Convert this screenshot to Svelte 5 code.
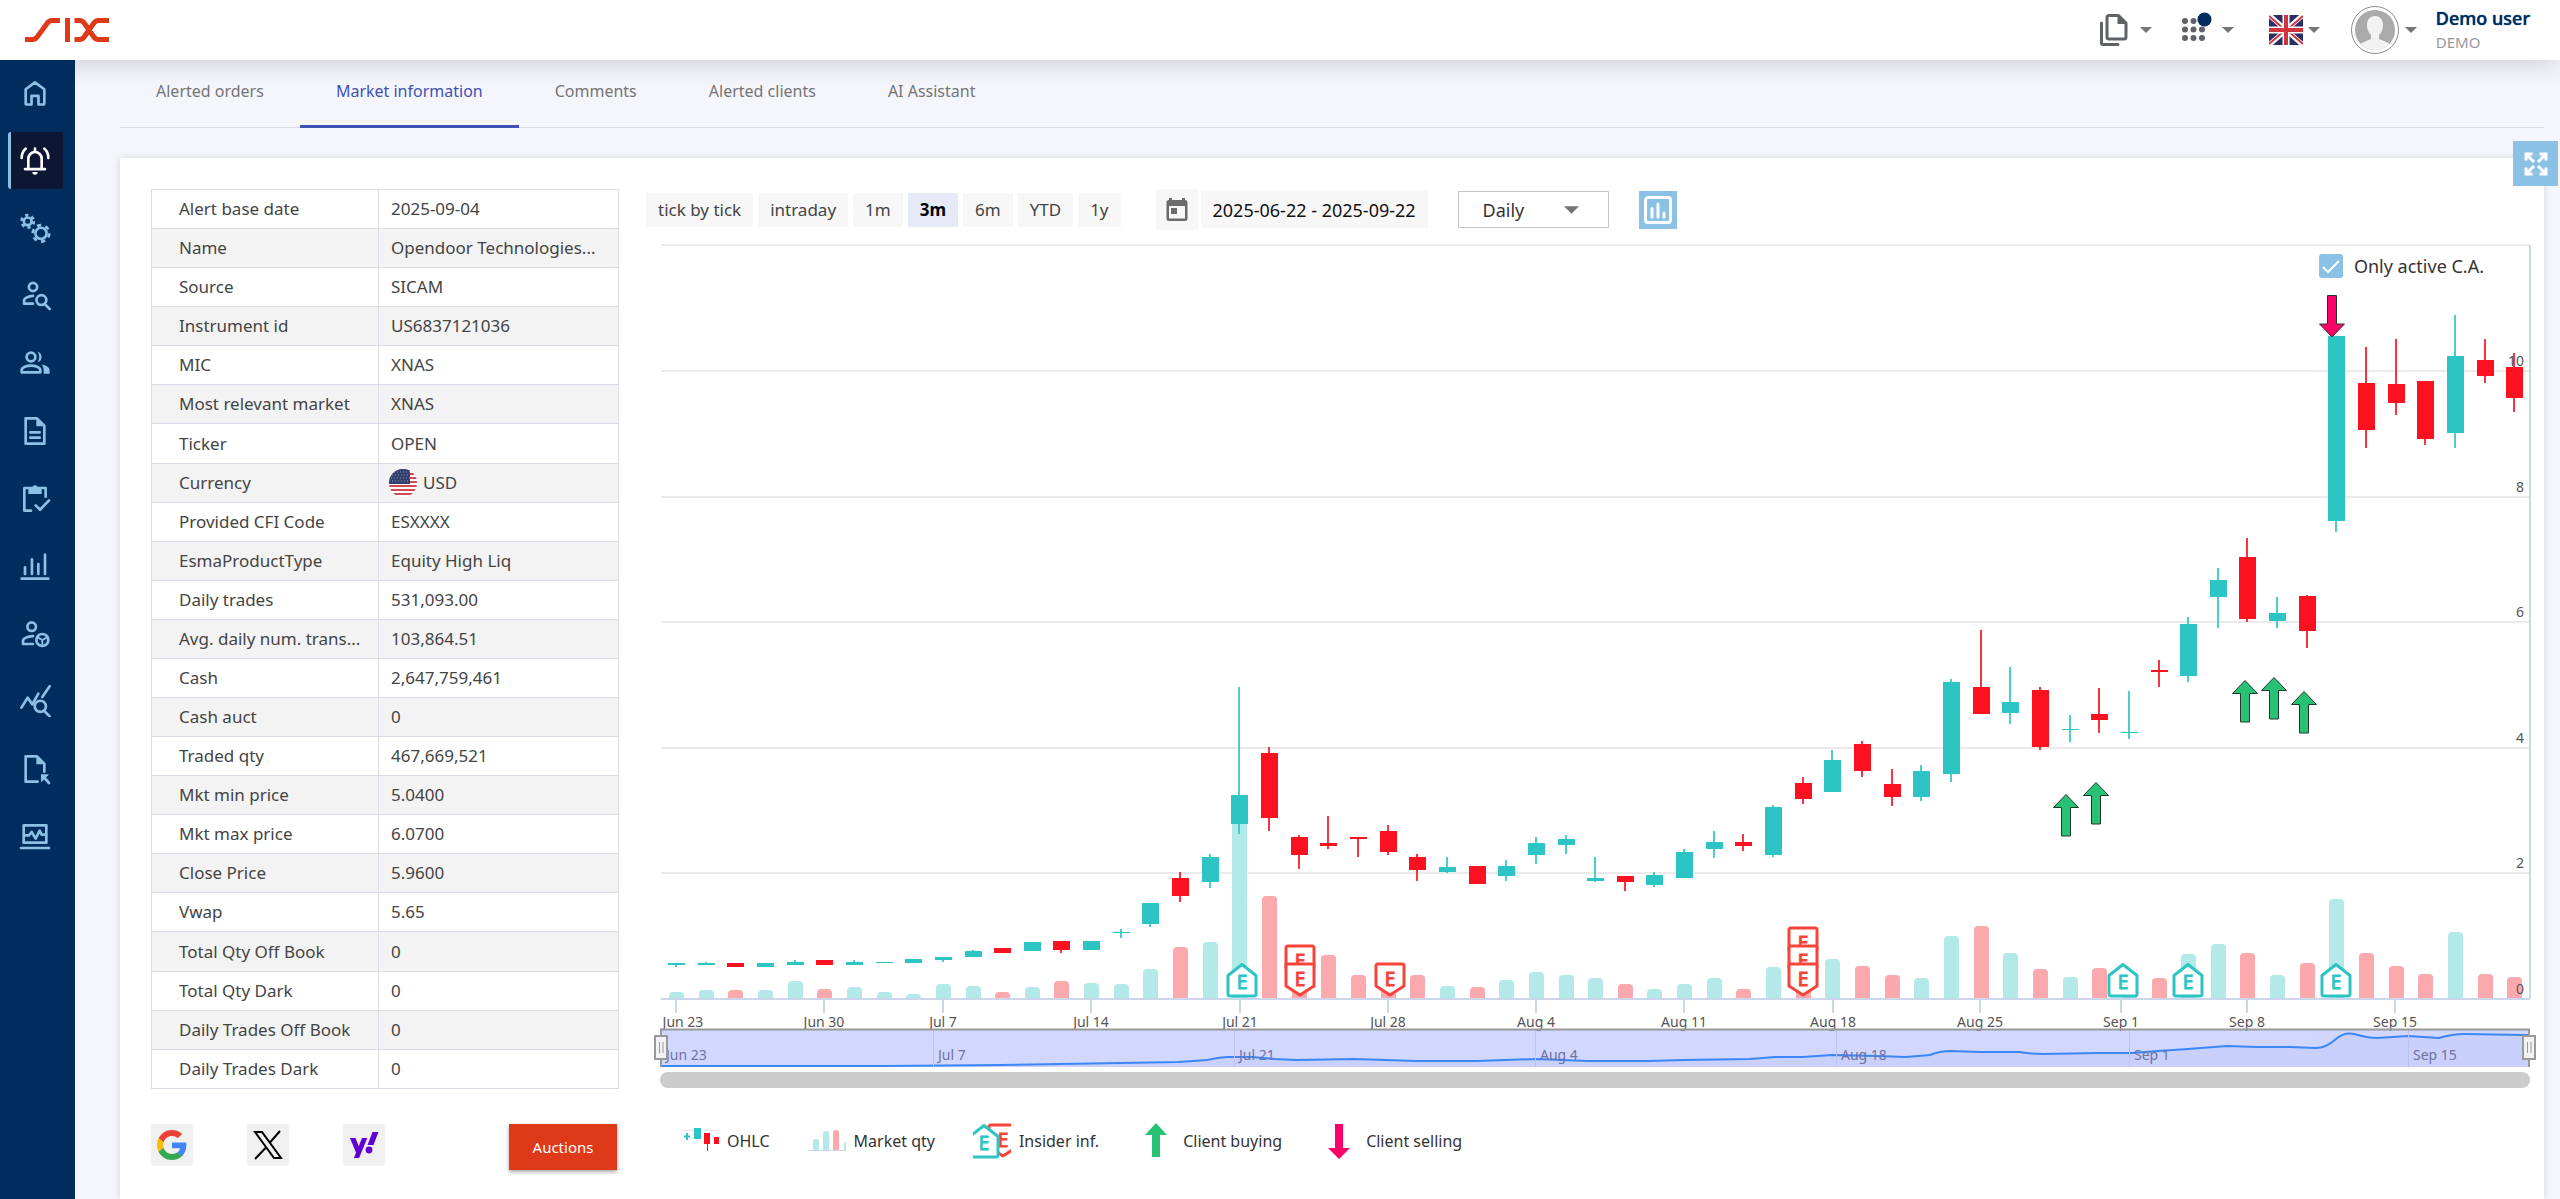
<script lang="ts">
  type Quote = { up: boolean; high: number; top: number; bottom: number; low: number; volume: number };

  const tabs = ['Alerted orders', 'Market information', 'Comments', 'Alerted clients', 'AI Assistant'];
  const ranges = ['tick by tick', 'intraday', '1m', '3m', '6m', 'YTD', '1y'];

  let activeTab = $state('Market information');
  let activeRange = $state('3m');
  let period = $state('2025-06-22 - 2025-09-22');
  let interval = $state('Daily');
  let onlyActive = $state(true);

  const details = [
    ['Alert base date', '2025-09-04'],
    ['Name', 'Opendoor Technologies...'],
    ['Source', 'SICAM'],
    ['Instrument id', 'US6837121036'],
    ['MIC', 'XNAS'],
    ['Most relevant market', 'XNAS'],
    ['Ticker', 'OPEN'],
    ['Currency', 'USD'],
    ['Provided CFI Code', 'ESXXXX'],
    ['EsmaProductType', 'Equity High Liq'],
    ['Daily trades', '531,093.00'],
    ['Avg. daily num. trans...', '103,864.51'],
    ['Cash', '2,647,759,461'],
    ['Cash auct', '0'],
    ['Traded qty', '467,669,521'],
    ['Mkt min price', '5.0400'],
    ['Mkt max price', '6.0700'],
    ['Close Price', '5.9600'],
    ['Vwap', '5.65'],
    ['Total Qty Off Book', '0'],
    ['Total Qty Dark', '0'],
    ['Daily Trades Off Book', '0'],
    ['Daily Trades Dark', '0'],
  ];

  const menu = ['home', 'alerts', 'settings', 'person-search', 'group', 'document', 'tasks', 'bars', 'person-globe', 'trend-search', 'import', 'monitor'];

  // direction, then high, body top, body bottom, low and volume as heights above the axis
  const raw: [string, number, number, number, number, number][] = [
    ['u', 36, 36, 34, 32, 7], ['u', 37, 36, 34, 34, 9], ['d', 36, 36, 32, 32, 9], ['u', 36, 36, 32, 32, 9], ['u', 39, 37, 34, 34, 18],
    ['d', 39, 39, 34, 34, 10], ['u', 39, 37, 34, 34, 12], ['u', 37, 37, 36, 36, 7], ['u', 40, 40, 36, 36, 5],
    ['u', 42, 42, 39, 37, 15], ['u', 49, 48, 42, 42, 13], ['d', 51, 51, 46, 46, 7], ['u', 57, 57, 48, 48, 12], ['d', 58, 58, 49, 46, 18],
    ['u', 58, 58, 49, 49, 16], ['u', 70, 67, 66, 61, 15], ['u', 96, 96, 75, 72, 30], ['d', 127, 121, 103, 97, 52], ['u', 145, 142, 117, 111, 57],
    ['u', 312, 204, 175, 165, 185], ['d', 252, 246, 181, 168, 103], ['d', 164, 162, 144, 130, 30], ['d', 183, 156, 153, 150, 44], ['d', 162, 162, 160, 142, 24],
    ['d', 174, 168, 147, 144, 20], ['d', 145, 142, 129, 118, 24], ['u', 142, 132, 127, 126, 13], ['d', 133, 133, 115, 115, 12], ['u', 139, 133, 123, 118, 19],
    ['u', 162, 156, 144, 135, 27], ['u', 164, 160, 154, 145, 24], ['u', 142, 121, 118, 117, 21], ['d', 123, 123, 117, 108, 15], ['u', 127, 124, 114, 112, 10],
    ['u', 150, 147, 121, 121, 15], ['u', 168, 157, 150, 141, 21], ['d', 165, 157, 153, 148, 10], ['u', 194, 192, 144, 142, 32], ['d', 222, 216, 200, 195, 20],
    ['u', 249, 239, 207, 207, 40], ['d', 258, 255, 228, 222, 33], ['d', 230, 215, 202, 193, 24], ['u', 234, 228, 202, 198, 21], ['u', 320, 317, 225, 217, 63],
    ['d', 369, 312, 285, 285, 73], ['u', 332, 297, 286, 275, 46], ['d', 312, 309, 252, 249, 30], ['u', 284, 270, 269, 257, 22], ['d', 311, 285, 279, 266, 31],
    ['u', 308, 267, 266, 260, 20], ['d', 339, 329, 327, 312, 21], ['u', 382, 375, 323, 317, 45], ['u', 431, 419, 402, 371, 55],
    ['d', 461, 442, 380, 377, 46], ['u', 402, 386, 378, 371, 24], ['d', 404, 403, 368, 351, 36], ['u', 663, 663, 478, 467, 100], ['d', 652, 616, 569, 551, 46],
    ['d', 660, 615, 596, 584, 33], ['d', 618, 618, 560, 554, 25], ['u', 684, 643, 566, 551, 67], ['d', 660, 639, 623, 616, 25], ['d', 646, 632, 601, 587, 22],
  ];
  const quotes: Quote[] = raw.map(([dir, high, top, bottom, low, volume]) => ({ up: dir === 'u', high, top, bottom, low, volume }));

  const axisY = 763;
  const quoteX = (i: number) => Math.round(30 + i * 29.65);
  const priceY = (price: number) => Math.round(axisY - price * 62.8);
  const barPath = (x: number, h: number) => `M${x - 7} ${axisY}v${-(h - 4)}q0-4 4-4h7q4 0 4 4v${h - 4}z`;

  const dateTicks = [
    { x: 30, label: 'Jun 23', at: 37 }, { x: 178, label: 'Jun 30' }, { x: 297, label: 'Jul 7' }, { x: 445, label: 'Jul 14' },
    { x: 594, label: 'Jul 21' }, { x: 742, label: 'Jul 28' }, { x: 890, label: 'Aug 4' }, { x: 1038, label: 'Aug 11' }, { x: 1187, label: 'Aug 18' },
    { x: 1334, label: 'Aug 25' }, { x: 1475, label: 'Sep 1' }, { x: 1601, label: 'Sep 8' }, { x: 1749, label: 'Sep 15' },
  ];
  const navTicks = [
    { x: 15, label: 'Jun 23' }, { x: 287, label: 'Jul 7' }, { x: 588, label: 'Jul 21' }, { x: 889, label: 'Aug 4' },
    { x: 1190, label: 'Aug 18' }, { x: 1483, label: 'Sep 1' }, { x: 1762, label: 'Sep 15' },
  ];
  const insiders = [
    { x: 596, buy: true }, { x: 654, y: 709 }, { x: 654, y: 727 }, { x: 744, y: 727 }, { x: 1157, y: 691 }, { x: 1157, y: 709 }, { x: 1157, y: 727 },
    { x: 1477, buy: true }, { x: 1542, buy: true }, { x: 1690, buy: true },
  ];
  const buys = [[1420, 558], [1450, 546], [1599, 444], [1628, 441], [1658, 455]];
  const navLine = 'M15 830L240 830L354 829L475 827L533 826L561 824Q575 821 582 821L606 821L629 823L651 824L708 823L770 825L831 825L891 823L941 825L1002 825L1038 824L1104 823L1129 821L1157 821L1186 819L1231 820L1260 821L1284 819Q1294 815 1304 815L1334 816L1373 816Q1385 818 1397 818L1453 817L1486 817L1512 815L1542 813L1581 810L1611 811L1644 811L1670 812Q1680 812 1690 803Q1698 796 1708 798Q1722 802 1731 802L1762 800L1793 802Q1806 798 1819 798L1876 799L1883 799';
</script>

{#snippet caret()}
  <svg class="caret" viewBox="0 0 12 6" aria-hidden="true"><path d="M0 0h12L6 6z" /></svg>
{/snippet}

{#snippet usFlag()}
  <svg class="us-flag" viewBox="0 0 28 28" aria-hidden="true">
    <clipPath id="us-round"><circle cx="14" cy="14" r="14" /></clipPath>
    <g clip-path="url(#us-round)">
      <path fill="#fff" d="M0 0h28v28H0z" />
      <path stroke="#cf4a55" stroke-width="2" d="M0 1h28M0 5h28M0 9h28M0 13h28M0 17h28M0 21h28M0 25h28" />
      <path fill="#32406e" d="M0 0h21v15H0z" />
      <path stroke="#8a93b5" stroke-dasharray="1 2" d="M2 3h19M3 6h18M2 9h19M3 12h18" />
    </g>
  </svg>
{/snippet}

{#snippet menuIcon(name: string)}
  <svg class="menu-icon" viewBox="0 0 24 24" aria-hidden="true">
    {#if name === 'home'}
      <path d="M5 19.6V9.2L12 4l7 5.2v10.4a1 1 0 0 1-1 1h-3.4v-6.4H9.4v6.4H6a1 1 0 0 1-1-1z" />
    {:else if name === 'alerts'}
      <path d="M7 18.5V11a5 5 0 0 1 10 0v7.500M4.500 18.800h15M12 5.500V3.500M2 10.500C2 7.500 3.200 5 5 3.500M22 10.500c0-3-1.200-5.500-3-7" />
      <path class="solid" d="M10 21h4a2 2 0 0 1-4 0z" />
    {:else if name === 'settings'}
      <circle cx="6.500" cy="7" r="2.900" />
      <circle cx="6.500" cy="7" r="4.600" stroke-dasharray="2.400 2.417" />
      <circle cx="16.500" cy="16" r="4.200" />
      <circle cx="16.500" cy="16" r="6.200" stroke-dasharray="3.200 3.293" />
    {:else if name === 'person-search'}
      <circle cx="10.500" cy="6" r="3.100" />
      <path d="M10.500 18.500H3.800v-2.200c0-2 3.300-3.600 6.700-3.700M19 18.500l4 4" />
      <circle cx="16.800" cy="15.800" r="3.700" />
    {:else if name === 'group'}
      <circle cx="9" cy="7.500" r="3.300" />
      <path d="M2 19v-1.500C2 15 6 14 9 14s7 1 7 3.500V19z" />
      <path class="solid" d="M14 3.500a4.200 4.200 0 0 1 0 8c1.600-2.500 1.600-5.500 0-8zM17 13.200c3 .6 6 2 6 4.500V20h-4.500v-2.500c0-1.800-.6-3.200-1.500-4.300z" />
    {:else if name === 'document'}
      <path d="M5 2.500h8.500L19 8v13.500H5zM8.500 13h7M8.500 17h7" />
      <path class="solid" d="M13 2v6.500h6.500z" />
    {:else if name === 'tasks'}
      <path d="M9 21.500H4V4.500h16V11M12.500 17.500l3.300 3.300 6.700-7" />
      <path class="solid" d="M7 4.500h3a2 2 0 0 1 4 0h3V9H7z" />
    {:else if name === 'bars'}
      <path d="M4.500 13v5M9.700 7v11M14.500 10.500V18M19.500 3.500V18M2 21.500h20" />
    {:else if name === 'person-globe'}
      <circle cx="9.500" cy="6.500" r="3.200" />
      <path d="M10.500 19.500H3v-2.200c0-2 3.300-3.600 7.500-3.700" />
      <circle cx="17.500" cy="16.500" r="4.500" />
      <path d="M17.500 21v-4.500l-3.500-2M17.500 16.500l3.500-2" stroke-width="1.400" />
    {:else if name === 'trend-search'}
      <path d="M1.800 17L6.500 9.500l3.500 5 4.500-8M17.500 9L23 1M19 19.500l4 4" />
      <circle cx="16" cy="16" r="4.200" />
    {:else if name === 'import'}
      <path d="M14 21.500H5v-19h8.500L19 8v6M22.500 22.500L18.500 18" />
      <path class="solid" d="M13 2v6.500h6.500zM16.500 16h6l-2 2.200-1.700 1.600-2.300 2.200z" />
    {:else}
      <path d="M3.500 4h17v13h-17zM1.500 21h21M3.500 11.500h4l2-2.500 3 5 3-6 1.500 3h3" />
    {/if}
  </svg>
{/snippet}

{#snippet insiderShape(buy: boolean)}
  {#if buy}
    <path class="insider buy" d="M-14 12.500L0 1.500 14 12.500V31a2 2 0 0 1-2 2h-24a2 2 0 0 1-2-2z" />
    <text class="insider-text buy" x="0" y="26">E</text>
  {:else}
    <path class="insider sell" d="M-14 2.500a1.500 1.500 0 0 1 1.500-1.500h25a1.500 1.500 0 0 1 1.500 1.500V23L0 32l-14-9z" />
    <text class="insider-text sell" x="0" y="23">E</text>
  {/if}
{/snippet}

<div class="page">
  <header>
    <a class="logo" href="#home" aria-label="SIX home">
      <svg viewBox="0 0 84 24" aria-hidden="true">
        <path d="M0 21.500h7.500q3 0 5-3L22 5.500q2-3 5-3h8M42.500 0v24M49.500 2.500h5q3 0 5 3l9 13q2 3 5 3H84M49.500 21.500h5q3 0 5-3l9-13q2-3 5-3H84" />
      </svg>
    </a>
    <div class="tools">
      <button class="tool files" aria-label="Files">
        <svg viewBox="0 0 28 32" aria-hidden="true">
          <path d="M7 3.500a2 2 0 0 1 2-2h9.500l7.500 7.500v14a2 2 0 0 1-2 2H9a2 2 0 0 1-2-2zM1.500 9v20a1.500 1.500 0 0 0 1.500 1.500h15" />
          <path class="solid" d="M17.500 1.500V10H26z" />
        </svg>
        {@render caret()}
      </button>
      <button class="tool apps" aria-label="Applications">
        <svg viewBox="0 0 32 32" aria-hidden="true">
          {#each [11, 19.5, 28] as y}
            {#each [3, 11.5, 20] as x}<circle cx={x} cy={y} r="3" />{/each}
          {/each}
          <circle class="notice" cx="22.500" cy="9.500" r="7" />
        </svg>
        {@render caret()}
      </button>
      <button class="tool language" aria-label="Language">
        <svg viewBox="0 0 34 30" aria-hidden="true">
          <path fill="#2c2f63" d="M0 0h34v30H0z" />
          <path stroke="#fff" stroke-width="5" d="M0 0l34 30M34 0L0 30" />
          <path stroke="#d0343f" stroke-width="2" d="M0 1l15 13M34 1L19 14M0 29l15-13M34 29L19 16" />
          <path stroke="#fff" stroke-width="7" d="M17 0v30M0 15h34" />
          <path stroke="#d0343f" stroke-width="4" d="M17 0v30M0 15h34" />
        </svg>
        {@render caret()}
      </button>
      <button class="tool account" aria-label="Account">
        <svg viewBox="0 0 48 48" aria-hidden="true">
          <clipPath id="avatar-round"><circle cx="24" cy="24" r="20" /></clipPath>
          <circle cx="24" cy="24" r="23.500" fill="#fff" stroke="#8c8c8c" />
          <circle cx="24" cy="24" r="20" fill="#aaa" />
          <path clip-path="url(#avatar-round)" fill="#f2f2f2" d="M24 10c5 0 8 3.500 8 9 0 5-2 8-4 10v4c4 2 9 3 12 6v8H8v-8c3-3 8-4 12-6v-4c-2-2-4-5-4-10 0-5.500 3-9 8-9z" />
        </svg>
        {@render caret()}
      </button>
      <div class="user"><strong>Demo user</strong><span>DEMO</span></div>
    </div>
  </header>

  <div class="layout">
    <nav aria-label="Main">
      <ul>
        {#each menu as item}
          <li><a href="#{item}" class:active={item === 'alerts'} aria-label={item}>{@render menuIcon(item)}</a></li>
        {/each}
      </ul>
    </nav>

    <main>
      <div class="tabs" role="tablist">
        {#each tabs as tab}
          <button role="tab" aria-selected={tab === activeTab} class:active={tab === activeTab} onclick={() => (activeTab = tab)}>{tab}</button>
        {/each}
      </div>

      <section class="card">
        <button class="expand" aria-label="Expand">
          <svg viewBox="0 0 24 24" aria-hidden="true">
            <path d="M2 8.500V2h6.500M2.500 2.500L10 10M15.500 2H22v6.500M21.500 2.500L14 10M2 15.500V22h6.500M2.500 21.500L10 14M15.500 22H22v-6.500M21.500 21.500L14 14" />
          </svg>
        </button>

        <div class="instrument">
          <table>
            <tbody>
              {#each details as [label, value]}
                <tr>
                  <th scope="row">{label}</th>
                  <td>{#if label === 'Currency'}<span class="currency">{@render usFlag()}{value}</span>{:else}{value}{/if}</td>
                </tr>
              {/each}
            </tbody>
          </table>

          <div class="actions">
            <a class="external" href="#google" aria-label="Google">
              <svg viewBox="0 0 48 48" aria-hidden="true">
                <path fill="#ea4335" d="M24 9.500c3.540 0 6.710 1.220 9.210 3.600l6.850-6.850C35.900 2.380 30.470 0 24 0 14.620 0 6.510 5.380 2.560 13.220l7.980 6.190C12.430 13.720 17.740 9.500 24 9.500z" />
                <path fill="#4285f4" d="M46.980 24.550c0-1.570-.15-3.090-.38-4.550H24v9.020h12.940c-.58 2.960-2.260 5.480-4.780 7.180l7.730 6c4.510-4.180 7.090-10.360 7.090-17.650z" />
                <path fill="#fbbc05" d="M10.530 28.590c-.48-1.450-.76-2.990-.76-4.590s.27-3.140.76-4.590l-7.980-6.190C.92 16.460 0 20.120 0 24c0 3.880.92 7.540 2.560 10.780l7.970-6.190z" />
                <path fill="#34a853" d="M24 48c6.480 0 11.930-2.130 15.890-5.810l-7.730-6c-2.150 1.450-4.920 2.300-8.160 2.300-6.260 0-11.570-4.220-13.470-9.910l-7.980 6.190C6.510 42.620 14.620 48 24 48z" />
              </svg>
            </a>
            <a class="external" href="#x" aria-label="X">
              <svg viewBox="0 0 30 30" aria-hidden="true">
                <path fill="none" stroke="#000" stroke-width="2" d="M2 2h7l19 26h-7zM27 1L16.500 13M13 17.500L2 29" />
              </svg>
            </a>
            <a class="external" href="#yahoo" aria-label="Yahoo">
              <svg viewBox="0 0 30 30" aria-hidden="true">
                <path fill="#6001d2" d="M1 8h5.500l3.200 8.200L13 8h5.300l-8.200 20H4.800l2.300-5.200zM23.500 2h6l-5 13h-6z" />
                <circle cx="20" cy="20" r="3.400" fill="#6001d2" />
              </svg>
            </a>
            <button class="auctions">Auctions</button>
          </div>
        </div>

        <div class="market">
          <div class="toolbar">
            <div class="ranges">
              {#each ranges as range}
                <button class:active={range === activeRange} onclick={() => (activeRange = range)}>{range}</button>
              {/each}
            </div>
            <div class="period">
              <button aria-label="Choose dates">
                <svg viewBox="0 0 22 24" aria-hidden="true">
                  <path fill="#6b6b6b" d="M3 0h3v2h10V0h3v2a2.500 2.500 0 0 1 2.500 2.500v16A2.500 2.500 0 0 1 19 23H3a2.500 2.500 0 0 1-2.500-2.500v-16A2.500 2.500 0 0 1 3 2zm0 8v12.500h16V8z" />
                  <path fill="#6b6b6b" d="M5 10h6v6H5z" />
                </svg>
              </button>
              <input type="text" aria-label="Period" bind:value={period} />
            </div>
            <div class="interval">
              <select aria-label="Interval" bind:value={interval}>
                <option>Daily</option>
                <option>Weekly</option>
                <option>Monthly</option>
              </select>
              {@render caret()}
            </div>
            <button class="chart-type" aria-label="Chart type">
              <svg viewBox="0 0 28 28" aria-hidden="true">
                <path d="M4 1.500h20A2.500 2.500 0 0 1 26.500 4v20a2.500 2.500 0 0 1-2.500 2.500H4A2.500 2.500 0 0 1 1.500 24V4A2.500 2.500 0 0 1 4 1.500z" />
                <path d="M8 12.500V21M14 8v13M20 17v4" stroke-linecap="round" />
              </svg>
            </button>
          </div>

          <div class="chart">
            <label class="only-active">
              <input type="checkbox" bind:checked={onlyActive} />
              <span class="box" aria-hidden="true"><svg viewBox="0 0 24 24"><path d="M4 13l5 5L20 7" /></svg></span>
              Only active C.A.
            </label>
            <svg class="plot" viewBox="0 0 1888 856" role="img" aria-label="Price and volume of OPEN">
              <!-- grid -->
              {#each [2, 4, 6, 8, 10, 12] as price}
                <path class="grid" d="M15 {priceY(price)}H1884" />
              {/each}

              {#each quotes as q, i}
                <path class={q.up ? 'volume up' : 'volume down'} d={barPath(quoteX(i), q.volume)} />
              {/each}
              <path class="axis" d="M15 {axisY}H1884M1884 9V{axisY}" />
              {#each quotes as q, i}
                <g class={q.up ? 'candle up' : 'candle down'}>
                  <rect x={quoteX(i) - 1} y={axisY - q.high} width="2" height={q.high - q.low} opacity="0.850" />
                  <rect x={quoteX(i) - 8} y={axisY - q.top} width="17" height={q.top - q.bottom} />
                </g>
              {/each}

              {#each insiders as mark}
                <g transform="translate({mark.x} {mark.y ?? 727})">{@render insiderShape(mark.buy ?? false)}</g>
              {/each}
              {#each buys as [x, y]}
                <path class="trade buying" transform="translate({x} {y})" d="M0 .5l12.500 13H4.500V42h-9V13.500h-8z" />
              {/each}
              <path class="trade selling" transform="translate(1686 59)" d="M0 42l12.500-13H4.500V.5h-9V29h-8z" />

              <!-- axis labels -->
              {#each [0, 2, 4, 6, 8, 10] as price}
                <text class="tick-text" text-anchor="end" x="1878" y={priceY(price) - 5}>{price}</text>
              {/each}
              {#each dateTicks as tick}
                <path class="tick" d="M{tick.x} {axisY}v14" />
                <text class="tick-text" text-anchor="middle" x={tick.at ?? tick.x} y="791">{tick.label}</text>
              {/each}

              <!-- navigator -->
              <path class="nav-area" d="{navLine}V831H15z" />
              <path class="nav-line" d={navLine} />
              <path class="nav-mask" d="M15 793h1868v38H15z" />
              {#each navTicks as tick, i}
                {#if i}<path class="nav-grid" d="M{tick.x}.5 794v37" />{/if}
                <text class="nav-text" x={tick.x + 5} y="824">{tick.label}</text>
              {/each}
              <path class="nav-outline" d="M15 831V793.500H1883V831" />
              {#each [15, 1883] as x}
                <g transform="translate({x} 800)">
                  <rect class="handle" x="-6" y="0" width="12" height="23" />
                  <path class="grip" d="M-1.500 6v11M2 6v11" />
                </g>
              {/each}
              <rect class="scrollbar" x="14" y="836" width="1870" height="16" rx="8" />
            </svg>
          </div>

          <ul class="legend">
            <li>
              <svg viewBox="0 0 38 38" aria-hidden="true">
                <path stroke="#e6e6e6" d="M0 8.500h38" />
                <path stroke="#2dc5c3" stroke-width="2" d="M3 14.500h6M6 11v7" />
                <path fill="#2dc5c3" d="M13 6h7v11h-7z" />
                <path fill="#fc1120" d="M23 11h6v11h-2v7h-1v-7h-3zM33 15h5v7h-5z" />
              </svg>
              OHLC
            </li>
            <li>
              <svg viewBox="0 0 38 38" aria-hidden="true">
                <path stroke="#ccd6eb" d="M0 28.500h38" />
                <path fill="#b3eae9" d="M5 28V19q0-2 3-2t3 2v9zM15 28V11q0-2 3-2t3 2v17zM36 28v-7q0-1 2-1v8z" />
                <path fill="#fba9ad" d="M25 28V10q0-2 3-2t3 2v18z" />
              </svg>
              Market qty
            </li>
            <li>
              <svg viewBox="0 0 38 38" aria-hidden="true">
                <g transform="translate(30 2)">{@render insiderShape(false)}</g>
                <path fill="#fff" d="M0 10L10 4l15 8v24H0z" />
                <g transform="translate(11 2)">{@render insiderShape(true)}</g>
              </svg>
              Insider inf.
            </li>
            <li>
              <svg viewBox="0 0 38 38" aria-hidden="true"><path fill="#29c274" d="M19 1l11 12h-7v22h-8V13H8z" /></svg>
              Client buying
            </li>
            <li>
              <svg viewBox="0 0 38 38" aria-hidden="true"><path fill="#ff0069" d="M19 37L8 26h7V2h8v24h7z" /></svg>
              Client selling
            </li>
          </ul>
        </div>
      </section>
    </main>
  </div>
</div>

<style>
  :global(body) { background: #f4f6fb; }
  .page { display: flex; flex-direction: column; min-height: 100vh; color: #444; font: 16px/24px 'Noto Sans', 'Open Sans', sans-serif; }
  button, input, select { font: inherit; color: inherit; }
  button { padding: 0; border: 0; background: none; cursor: pointer; }
  ul { margin: 0; padding: 0; list-style: none; }
  svg { display: block; }

  header { position: relative; display: flex; align-items: center; justify-content: space-between; height: 60px; padding: 0 30px 0 25px; background: #fff; box-shadow: 0 0 30px rgb(0 0 0 / 20%); }
  .logo svg { width: 84px; height: 24px; fill: none; stroke: #de3919; stroke-width: 5; }
  .tools { display: flex; align-items: center; }
  .tool { display: flex; align-items: center; }
  .caret { width: 12px; height: 6px; fill: #757575; }
  .files { gap: 12px; margin-right: 30px; }
  .files svg:first-child { width: 28px; height: 32px; fill: none; stroke: #5f6368; stroke-width: 3; stroke-linejoin: round; stroke-linecap: round; }
  .files svg .solid { fill: #5f6368; stroke: none; }
  .apps { gap: 8px; margin-right: 35px; }
  .apps svg:first-child { width: 32px; height: 32px; margin-top: -8px; fill: #5f6368; }
  .apps .notice { fill: #002d5e; }
  .language { gap: 5px; margin-right: 31px; }
  .language svg:first-child { width: 34px; height: 30px; }
  .account { gap: 6px; margin-right: 19px; }
  .account svg:first-child { width: 48px; height: 48px; }
  .user { display: flex; flex-direction: column; gap: 2px; }
  .user strong { color: #002d5e; font-size: 18px; font-weight: 500; line-height: 22px; text-shadow: 0 0 1px #002d5e; }
  .user span { color: #999; font-size: 15px; line-height: 22px; }

  .layout { display: flex; flex: 1; }
  nav { position: relative; width: 75px; padding-top: 4px; background: #002d5e; box-sizing: border-box; }
  nav ul { display: flex; flex-direction: column; justify-content: space-between; height: 801px; }
  nav a { display: flex; align-items: center; width: 52px; height: 57px; margin-left: 8px; border-left: 3px solid transparent; border-radius: 3px; color: #8ac1e5; }
  nav a.active { border-left-color: #8ac1e5; background: #0d1733; color: #fff; }
  .menu-icon { width: 32px; height: 32px; margin-left: 8px; fill: none; stroke: currentColor; stroke-width: 2; stroke-linejoin: round; stroke-linecap: round; }
  .menu-icon circle[stroke-dasharray] { stroke-linecap: butt; }
  .menu-icon .solid { fill: currentColor; stroke: none; }

  main { display: flex; flex: 1; flex-direction: column; min-width: 0; padding: 0 16px 0 45px; }
  .tabs { display: flex; position: relative; height: 67px; border-bottom: 1px solid #d9dbe0; font-size: 16px; }
  .tabs button { padding: 0 36px 6px; color: #757575; }
  .tabs button.active { margin-bottom: -1px; padding-bottom: 4px; border-bottom: 3px solid #3f51b5; color: #3f51b5; }

  .card { position: relative; display: flex; flex: 1; gap: 27px; margin-top: 30px; padding: 31px 10px 28px 31px; background: #fff; box-shadow: 0 0 8px rgb(0 0 0 / 12%); }
  .expand { position: absolute; top: -17px; right: -14px; display: grid; width: 45px; height: 45px; place-items: center; background: #8ac1e5; }
  .expand svg { width: 24px; height: 24px; fill: none; stroke: #fff; stroke-width: 3; }

  .instrument { flex: 0 0 468px; }
  table { width: 100%; height: 900px; border-collapse: collapse; table-layout: fixed; font-size: 17px; }
  tr { height: 39px; }
  tr:nth-child(even) { background: #f3f3f3; }
  th, td { padding: 0; border: 1px solid #dadde9; font-weight: 400; text-align: left; white-space: nowrap; }
  th { width: 199px; padding-left: 27px; }
  td { padding-left: 12px; }
  .currency { display: flex; align-items: center; gap: 6px; margin-left: -2px; }
  .us-flag { width: 28px; height: 28px; }

  .actions { display: flex; align-items: flex-start; gap: 54px; margin-top: 35px; }
  .external { display: grid; width: 42px; height: 42px; place-items: center; background: #f0f0f0; }
  .external svg { width: 30px; height: 30px; }
  .auctions { width: 108px; height: 46px; margin: 0 2px 0 auto; background: #de3919; box-shadow: 0 2px 4px rgb(0 0 0 / 35%); color: #fff; font-size: 15px; }

  .market { flex: 1; min-width: 0; }
  .toolbar { display: flex; align-items: center; height: 41px; }
  .ranges { display: flex; gap: 5px; font-size: 17px; }
  .ranges button { height: 34px; padding: 0 12px; background: #f7f7f7; }
  .ranges button.active { background: #e6eaf6; color: #000; font-weight: 700; }
  .period { display: flex; align-items: center; gap: 3px; margin-left: 35px; }
  .period button { display: grid; width: 42px; height: 41px; place-items: center; background: #f7f7f7; }
  .period svg { width: 22px; height: 24px; }
  .period input { width: 227px; height: 37px; padding: 0 12px; border: 0; background: #f7f7f7; color: #111; font-size: 18px; box-sizing: border-box; }
  .interval { position: relative; margin-left: 30px; }
  .interval select { width: 151px; height: 37px; padding: 0 24px; border: 1px solid #c4c4c4; border-radius: 0; background: #fff; color: #333; appearance: none; font-size: 18px; }
  .interval .caret { position: absolute; top: 15px; right: 30px; width: 15px; height: 8px; pointer-events: none; }
  .chart-type { display: grid; width: 38px; height: 38px; margin-left: 30px; place-items: center; background: #8ac1e5; }
  .chart-type svg { width: 28px; height: 28px; fill: none; stroke: #fff; stroke-width: 3; }

  .chart { position: relative; margin-top: 6px; }
  .plot { width: 100%; height: auto; overflow: visible; }
  .only-active { position: absolute; top: 18px; right: 50px; display: flex; align-items: center; gap: 11px; color: #333; font-size: 18px; }
  .only-active input { position: absolute; width: 24px; height: 24px; margin: 0; opacity: 0; }
  .box { width: 24px; height: 24px; border-radius: 3px; background: #8ac1e5; }
  .box svg { visibility: hidden; fill: none; stroke: #fff; stroke-width: 2; }
  .only-active input:checked + .box svg { visibility: visible; }

  .grid { stroke: #ebebeb; stroke-width: 2; }
  .axis, .tick { fill: none; stroke: #ccd6eb; stroke-width: 2; }
  .volume.up { fill: #b3eae9; }
  .volume.down { fill: #fba9ad; }
  .candle.up { fill: #2dc5c3; }
  .candle.down { fill: #fc1120; }
  .insider { fill: #fff; stroke-width: 3; stroke-linejoin: round; }
  .insider.buy { stroke: #2dc5c3; }
  .insider.sell { stroke: #f7443a; }
  .insider-text { font-size: 19px; text-anchor: middle; }
  .insider-text.buy { fill: #2dc5c3; stroke: #2dc5c3; }
  .insider-text.sell { fill: #f7443a; stroke: #f7443a; }
  .trade { stroke: #1f3a2c; stroke-width: 1; }
  .trade.buying { fill: #29c274; }
  .trade.selling { fill: #ff0069; }
  .tick-text, .nav-text { fill: #555; font-size: 14px; }
  .nav-text { fill: #7072a0; }
  .nav-mask { fill: rgb(102 122 255 / 30%); }
  .nav-area { fill: rgb(51 92 173 / 6%); }
  .nav-line { fill: none; stroke: #2a8df5; stroke-width: 2; stroke-linejoin: round; }
  .nav-grid { stroke: #bcc3ec; }
  .nav-outline { fill: none; stroke: #999; stroke-width: 2; }
  .handle { fill: #f2f2f2; stroke: #999; stroke-width: 2; }
  .grip { stroke: #999; stroke-width: 1; }
  .scrollbar { fill: #ccc; }

  .legend { display: flex; gap: 38px; margin: 30px 0 0 35px; color: #333; font-size: 16px; }
  .legend li { display: flex; align-items: center; gap: 8px; height: 38px; }
  .legend svg { width: 38px; height: 38px; }
</style>
